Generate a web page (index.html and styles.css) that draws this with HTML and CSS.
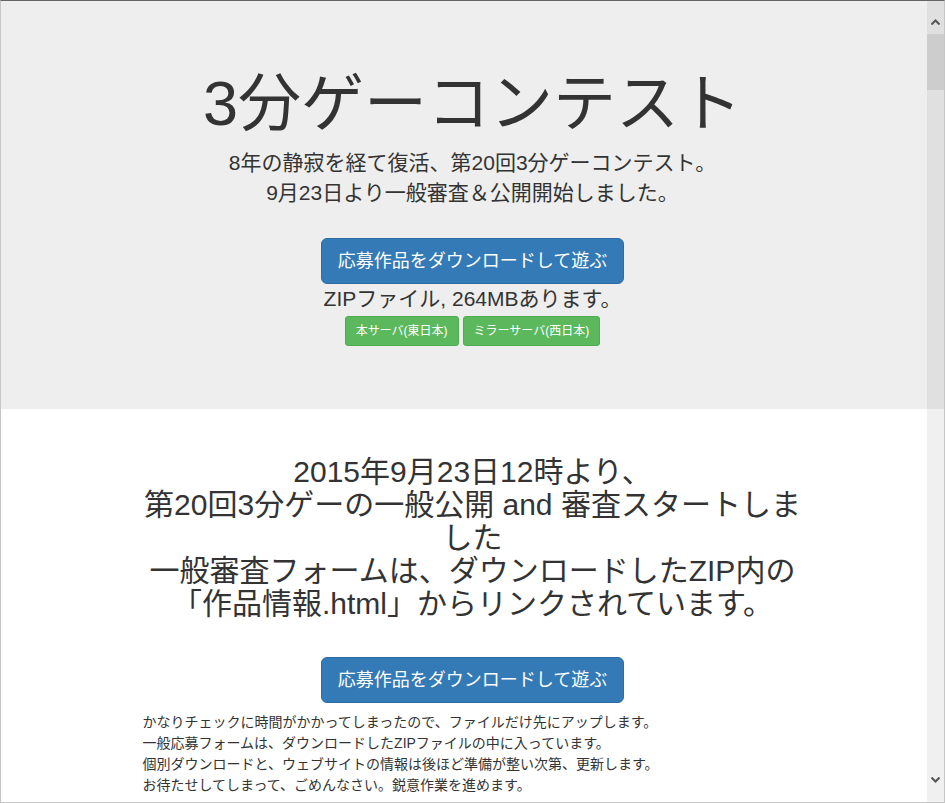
FILE: index.html
```html
<!DOCTYPE html>
<html lang="ja">
<head>
  <meta charset="UTF-8" />
  <meta name="viewport" content="width=device-width, initial-scale=1.0"/>
  <title>3分ゲーコンテスト</title>
  <link rel="stylesheet" href="styles.css">
</head>
<body>
  <div class="frame">
    <div class="jumbotron">
      <h1>3分ゲーコンテスト</h1>
      <p class="lead">8年の静寂を経て復活、第20回3分ゲーコンテスト。<br />9月23日より一般審査＆公開開始しました。</p>
      <div class="download">
        <a class="btn btn-primary btn-lg" href="#">応募作品をダウンロードして遊ぶ</a>
        <div class="zip-note">ZIPファイル, 264MBあります。</div>
        <div class="mirrors">
          <a class="btn btn-success btn-sm" href="#">本サーバ(東日本)</a>
          <a class="btn btn-success btn-sm" href="#">ミラーサーバ(西日本)</a>
        </div>
      </div>
    </div>

    <div class="container">
      <h2>2015年9月23日12時より、<br />第20回3分ゲーの一般公開 and 審査スタートしました<br />一般審査フォームは、ダウンロードしたZIP内の「作品情報.html」からリンクされています。</h2>
      <div class="center">
        <a class="btn btn-primary btn-lg" href="#">応募作品をダウンロードして遊ぶ</a>
      </div>
      <p class="notice">
        かなりチェックに時間がかかってしまったので、ファイルだけ先にアップします。<br />
        一般応募フォームは、ダウンロードしたZIPファイルの中に入っています。<br />
        個別ダウンロードと、ウェブサイトの情報は後ほど準備が整い次第、更新します。<br />
        お待たせしてしまって、ごめんなさい。鋭意作業を進めます。
      </p>
    </div>

    <div class="scrollbar">
      <div class="arrow arrow-up">
        <svg width="9" height="6" viewBox="0 0 9 6"><path d="M0.5 5.5 L4.5 1.5 L8.5 5.5" fill="none" stroke="#555" stroke-width="2"/></svg>
      </div>
      <div class="thumb"></div>
      <div class="track-rest"></div>
      <div class="arrow arrow-down">
        <svg width="9" height="6" viewBox="0 0 9 6"><path d="M0.5 0.5 L4.5 4.5 L8.5 0.5" fill="none" stroke="#555" stroke-width="2"/></svg>
      </div>
    </div>
  </div>
</body>
</html>
```

FILE: styles.css
```css
html, body {
  margin: 0;
  padding: 0;
}

body {
  font-family: "Liberation Sans", Arial, "Noto Sans CJK JP", sans-serif;
  font-size: 14px;
  line-height: 1.42857;
  color: #333;
  background-color: #fff;
  overflow: hidden;
}

.frame {
  position: relative;
  height: 803px;
  box-sizing: border-box;
  border: 1px solid #c6c6c6;
  border-top-color: #646464;
  overflow: hidden;
}

.jumbotron {
  background-color: #eee;
  padding: 48px 0;
  text-align: center;
}

.jumbotron h1 {
  font-size: 63px;
  font-weight: 400;
  line-height: 1.1;
  margin: 20px 0 10px;
}

.lead {
  font-size: 21px;
  line-height: 30px;
  margin: 0 0 15px;
}

.download {
  margin-top: 30px;
  margin-bottom: 15px;
}

.zip-note {
  font-size: 21px;
  line-height: 30px;
}

.mirrors {
  display: flex;
  justify-content: center;
  gap: 4px;
  margin-top: 2px;
}

.btn {
  display: inline-block;
  text-decoration: none;
  border: 1px solid transparent;
  color: #fff;
  white-space: nowrap;
}

.btn-lg {
  font-size: 18px;
  line-height: 24px;
  padding: 10px 16px;
  border-radius: 6px;
}

.btn-sm {
  font-size: 12px;
  line-height: 18px;
  padding: 5px 10px;
  border-radius: 3px;
}

.btn-primary {
  background-color: #337ab7;
  border-color: #2e6da4;
}

.btn-success {
  background-color: #5cb85c;
  border-color: #4cae4c;
}

.container {
  width: 660px;
  margin: 0 auto;
  padding-top: 26px;
}

.container h2 {
  font-size: 30px;
  font-weight: 400;
  line-height: 1.1;
  text-align: center;
  margin: 20px 0 37px;
}

.center {
  text-align: center;
}

.notice {
  margin: 9px 0 0;
  line-height: 21px;
}

.scrollbar {
  position: absolute;
  top: 0;
  right: 0;
  bottom: 0;
  width: 17px;
  display: flex;
  flex-direction: column;
  background-color: rgba(0, 0, 0, 0.06);
}

.arrow {
  height: 33px;
  display: flex;
  justify-content: center;
  align-items: center;
  box-sizing: border-box;
}

.arrow-up {
  padding-top: 9px;
}

.arrow-down {
  padding-bottom: 12px;
}

.thumb {
  height: 56px;
  background-color: #cdcdcd;
}

.track-rest {
  flex: 1;
}
```
